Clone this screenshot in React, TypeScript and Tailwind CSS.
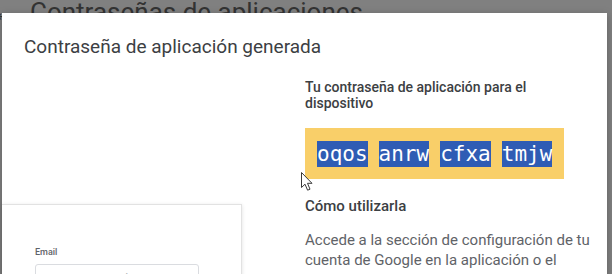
import React from 'react'

const passwordGroups = ['oqos', 'anrw', 'cfxa', 'tmjw']

function Pointer() {
    return (
        <svg
            className="absolute left-[300px] top-[171px]"
            width="14"
            height="21"
            viewBox="0 0 14 21"
        >
            <path
                d="M1.5 1.5 L1.5 16.5 L5 13.2 L7.6 19.2 L10 18.2 L7.5 12.3 L12 12.3 Z"
                fill="#ffffff"
                stroke="#3a3a3a"
                strokeWidth="1"
                strokeLinejoin="round"
            />
        </svg>
    )
}

export default function App() {
    return (
        <div className="relative w-[612px] h-[274px] overflow-hidden bg-[#808080] font-['Roboto',sans-serif]">
            {/* page behind the modal */}
            <div className="flex items-start -mt-[1px]">
                <span className="text-[26px] leading-[26px] text-[#3a3a3a] -ml-[8px] w-[38px]">
                    ←
                </span>
                <h1 className="text-[26px] leading-[26px] text-[#333333]">
                    Contraseñas de aplicaciones
                </h1>
            </div>

            {/* modal */}
            <div className="absolute left-[2px] top-[13px] w-[605px] h-[300px] bg-white shadow-[0_2px_8px_rgba(0,0,0,0.25)]">
                <h2 className="pt-[20px] pl-[22px] text-[19px] leading-[28px] text-[#3c4043]">
                    Contraseña de aplicación generada
                </h2>

                <div className="flex mt-[18px]">
                    {/* device illustration */}
                    <div className="w-[240px] shrink-0">
                        <div className="mt-[125px] h-[120px] border-t border-r border-[#e2e2e2] shadow-[0_1px_4px_rgba(0,0,0,0.12)] pl-[33px] pt-[41px]">
                            <div className="text-[9px] leading-[12px] font-medium text-[#5f6368]">
                                Email
                            </div>
                            <div className="mt-[6px] w-[164px] h-[30px] border border-[#dadce0] rounded-[3px] pl-[12px] pt-[6px] text-[12px] leading-[16px] text-[#b0b4b8]">
                                usuario@gmail.com
                            </div>
                        </div>
                    </div>

                    {/* instructions */}
                    <div className="ml-[63px] w-[292px]">
                        <p className="text-[14px] leading-[16px] font-medium text-[#3c4043]">
                            Tu contraseña de aplicación para el dispositivo
                        </p>
                        <div className="inline-flex mt-[17px] bg-[#f9cf69] px-[12px] pt-[13px] pb-[12px] gap-[11px]">
                            {passwordGroups.map((group) => (
                                <span
                                    key={group}
                                    className="bg-[#2f5cb4] text-white text-[21px] leading-[26px] font-['DejaVu_Sans_Mono',monospace]"
                                >
                                    {group}
                                </span>
                            ))}
                        </div>
                        <h3 className="mt-[17px] text-[15px] leading-[20px] font-medium text-[#3c4043]">
                            Cómo utilizarla
                        </h3>
                        <p className="mt-[14px] text-[15px] leading-[20px] text-[#5f6368]">
                            Accede a la sección de configuración de tu cuenta de
                            Google en la aplicación o el dispositivo que estás
                            intentando configurar. Sustituye tu contraseña por la
                            de 16 caracteres que se muestra arriba.
                        </p>
                    </div>
                </div>
            </div>

            <Pointer />
        </div>
    )
}
